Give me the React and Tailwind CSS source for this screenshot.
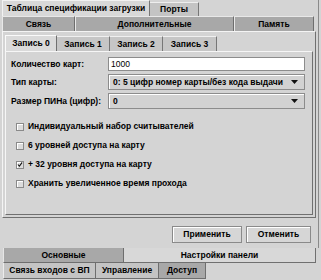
import React from "react";

const font = { fontFamily: '"Liberation Sans", Arial, sans-serif' };

function DarkTab({ w, children, className = "" }) {
  return (
    <div
      className={`h-full flex items-center justify-center bg-[#a8a8a8] border-t border-l border-r border-t-[#e8e8e8] border-l-[#e8e8e8] border-r-[#6e6e6e] font-bold text-[8.5px] text-black ${className}`}
      style={{ width: w }}
    >
      {children}
    </div>
  );
}

function Combo({ text }) {
  return (
    <div className="h-[16px] w-[197px] flex items-center justify-between bg-[#d2d2d2] border border-[#8c8c8c] shadow-[inset_1px_1px_0_#ffffff] pl-[4px] pr-[6px]">
      <span className="font-bold text-[8.5px] text-black leading-none">{text}</span>
      <svg width="7" height="4" viewBox="0 0 7 4"><path d="M0 0h7L3.5 4z" fill="#111" /></svg>
    </div>
  );
}

function Check({ checked, children }) {
  return (
    <div className="h-[19px] flex items-center pl-[10px]">
      <div className="w-[8px] h-[8px] border border-[#8a8a8a] bg-[#dcdcdc] shadow-[inset_1px_1px_0_#ffffff] flex items-center justify-center">
        {checked && (
          <svg width="7" height="7" viewBox="0 0 7 7"><path d="M1 3.5l1.8 2L6 1" stroke="#111" strokeWidth="1.3" fill="none" /></svg>
        )}
      </div>
      <span className="ml-[4px] font-bold text-[8.5px] text-black leading-none">{children}</span>
    </div>
  );
}

function Button({ w, children }) {
  return (
    <div
      className="h-[17px] flex items-center justify-center bg-[#d6d6d6] border border-[#8a8a8a] shadow-[inset_1px_1px_0_#ffffff] font-bold text-[8.5px] text-black"
      style={{ width: w }}
    >
      {children}
    </div>
  );
}

export default function App() {
  return (
    <div className="w-[321px] h-[280px] bg-[#d4d4d4] overflow-hidden flex flex-col" style={font}>
      <div className="h-[248px] w-[319px] flex flex-col border-r border-[#8a8a8a]">
        {/* top tab rows */}
        <div className="h-[16px] flex pl-[2px]">
          <div className="h-[16px] w-[148px] flex items-center justify-center bg-[#d8d8d8] border-t border-l border-r border-t-[#f2f2f2] border-l-[#f2f2f2] border-r-[#777] font-bold text-[8.5px] text-black">
            Таблица спецификации загрузки
          </div>
          <div className="mt-[2px] h-[14px] w-[49px] flex items-center justify-center bg-[#c4c4c4] border-t border-r border-t-[#eee] border-r-[#777] font-bold text-[8.5px] text-black">
            Порты
          </div>
        </div>
        <div className="h-[15px] flex pl-[2px]">
          <DarkTab w={73}>Связь</DarkTab>
          <DarkTab w={159}>Дополнительные</DarkTab>
          <DarkTab w={80}>Память</DarkTab>
        </div>
        {/* top pane content */}
        <div className="ml-[2px] w-[314px] h-[187px] border-t border-l border-r border-b border-t-[#f4f4f4] border-l-[#f4f4f4] border-r-[#707070] border-b-[#707070] pt-[3px] pl-[2px]">
          <div className="h-[16px] flex">
            <div className="h-[16px] w-[52px] flex items-center justify-center bg-[#dadada] border-t border-l border-r border-t-[#fafafa] border-l-[#fafafa] border-r-[#707070] font-bold text-[8.5px] text-black">
              Запись 0
            </div>
            <div className="mt-[1px] h-[15px] w-[53px] flex items-center justify-center bg-[#c6c6c6] border-t border-r border-t-[#f0f0f0] border-r-[#777] font-bold text-[8.5px] text-black">
              Запись 1
            </div>
            <div className="mt-[1px] h-[15px] w-[53px] flex items-center justify-center bg-[#c6c6c6] border-t border-r border-t-[#f0f0f0] border-r-[#777] font-bold text-[8.5px] text-black">
              Запись 2
            </div>
            <div className="mt-[1px] h-[15px] w-[54px] flex items-center justify-center bg-[#c6c6c6] border-t border-r border-t-[#f0f0f0] border-r-[#777] font-bold text-[8.5px] text-black">
              Запись 3
            </div>
          </div>
          <div className="w-[308px] h-[164px] border-t border-l border-r border-b border-t-[#f6f6f6] border-l-[#f6f6f6] border-r-[#707070] border-b-[#707070] pt-[5px]">
            <div className="flex items-center h-[14px]">
              <div className="w-[102px] pl-[5px] font-bold text-[8.5px] text-black">Количество карт:</div>
              <div className="h-[14px] w-[197px] bg-white border border-[#8c8c8c] flex items-center pl-[2px] text-[8.5px] text-black">1000</div>
            </div>
            <div className="flex items-center h-[16px] mt-[3px]">
              <div className="w-[102px] pl-[5px] font-bold text-[8.5px] text-black">Тип карты:</div>
              <Combo text="0: 5 цифр номер карты/без кода выдачи" />
            </div>
            <div className="flex items-center h-[16px] mt-[3px]">
              <div className="w-[102px] pl-[5px] font-bold text-[8.5px] text-black">Размер ПИНа (цифр):</div>
              <Combo text="0" />
            </div>
            <div className="mt-[8px]">
              <Check>Индивидуальный набор считывателей</Check>
              <Check>6 уровней доступа на карту</Check>
              <Check checked>+ 32 уровня доступа на карту</Check>
              <Check>Хранить увеличенное время прохода</Check>
            </div>
          </div>
        </div>
        {/* buttons */}
        <div className="flex justify-end gap-[4px] pr-[7px] pt-[8px]">
          <Button w={70}>Применить</Button>
          <Button w={65}>Отменить</Button>
        </div>
      </div>
      {/* bottom tabs */}
      <div className="h-[15px] flex pl-[3px]">
        <div className="h-[15px] w-[121px] flex items-center justify-center bg-[#a8a8a8] border-l border-r border-b border-l-[#e6e6e6] border-r-[#6e6e6e] border-b-[#6e6e6e] font-bold text-[8.5px] text-black">
          Основные
        </div>
        <div className="h-[15px] w-[192px] flex items-center justify-center bg-[#d8d8d8] border-r border-b border-r-[#707070] border-b-[#707070] font-bold text-[8.5px] text-black">
          Настройки панели
        </div>
      </div>
      <div className="h-[17px] flex pl-[3px]">
        <div className="h-[16px] w-[93px] flex items-center justify-center bg-[#c4c4c4] border-l border-r border-b border-l-[#ececec] border-r-[#6e6e6e] border-b-[#6e6e6e] font-bold text-[8.5px] text-black">
          Связь входов с ВП
        </div>
        <div className="h-[16px] w-[63px] flex items-center justify-center bg-[#c4c4c4] border-r border-b border-r-[#6e6e6e] border-b-[#6e6e6e] font-bold text-[8.5px] text-black">
          Управление
        </div>
        <div className="h-[16px] w-[47px] flex items-center justify-center bg-[#a8a8a8] border-r border-b border-r-[#6e6e6e] border-b-[#6e6e6e] font-bold text-[8.5px] text-black">
          Доступ
        </div>
      </div>
    </div>
  );
}
